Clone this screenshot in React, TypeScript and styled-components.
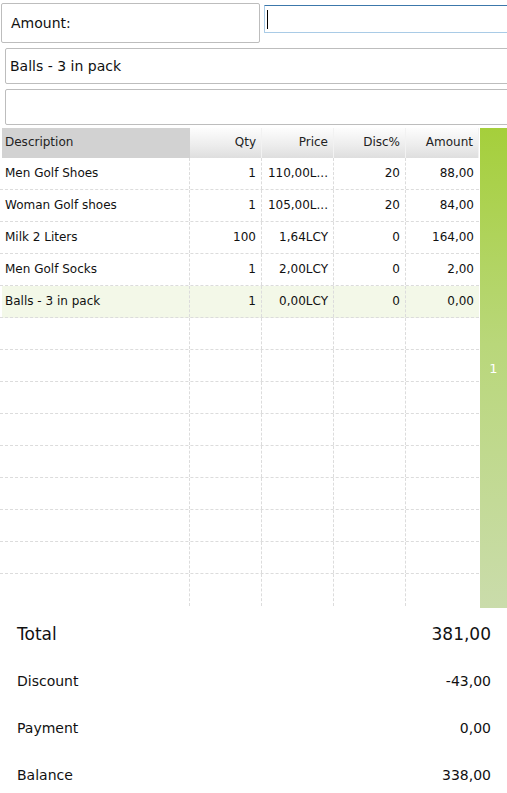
import React from 'react';
import styled, { createGlobalStyle } from 'styled-components';

const GlobalStyle = createGlobalStyle`
  html, body {
    margin: 0;
    padding: 0;
    background: #fff;
    overflow: hidden;
  }
  body {
    font-family: 'DejaVu Sans', Verdana, sans-serif;
    color: #111;
  }
`;

interface Line {
  description: string;
  qty: string;
  price: string;
  disc: string;
  amount: string;
}

const lines: Line[] = [
  { description: 'Men Golf Shoes', qty: '1', price: '110,00L...', disc: '20', amount: '88,00' },
  { description: 'Woman Golf shoes', qty: '1', price: '105,00L...', disc: '20', amount: '84,00' },
  { description: 'Milk 2 Liters', qty: '100', price: '1,64LCY', disc: '0', amount: '164,00' },
  { description: 'Men Golf Socks', qty: '1', price: '2,00LCY', disc: '0', amount: '2,00' },
  { description: 'Balls - 3 in pack', qty: '1', price: '0,00LCY', disc: '0', amount: '0,00' },
];

const TOTAL_ROWS = 14;
const ROW_COLS = '190px 72px 72px 72px 73px';
const HEAD_COLS = '188px 72px 72px 72px 73px';

const Page = styled.div`
  width: 507px;
  height: 793px;
  overflow: hidden;
  display: flex;
  flex-direction: column;
  & > * {
    flex-shrink: 0;
  }
`;

const TopRow = styled.div`
  display: flex;
  align-items: flex-start;
  gap: 4px;
  padding: 3px 0 0 1px;
`;

const LabelBox = styled.div`
  box-sizing: border-box;
  flex: 0 0 259px;
  height: 40px;
  border: 1px solid #bdbdbd;
  border-radius: 2px;
  display: flex;
  align-items: center;
  padding-left: 9px;
  font-size: 14px;
`;

const InputBox = styled.div`
  box-sizing: border-box;
  flex: 0 0 260px;
  height: 28px;
  margin-top: 2px;
  border: 1px solid #a9cbe6;
  border-top-color: #3c78ab;
  border-radius: 1px;
  display: flex;
  align-items: center;
  padding-left: 2px;
`;

const Caret = styled.span`
  width: 1px;
  height: 19px;
  background: #000;
`;

const FieldBox = styled.div`
  box-sizing: border-box;
  margin: 5px -10px 0 5px;
  height: 36px;
  border: 1px solid #bdbdbd;
  border-radius: 2px;
  display: flex;
  align-items: center;
  padding-left: 4px;
  font-size: 14px;
`;

const GridArea = styled.div`
  display: flex;
  margin-top: 3px;
  height: 480px;
`;

const Table = styled.div`
  width: 479px;
  display: flex;
  flex-direction: column;
`;

const HeaderRow = styled.div`
  display: grid;
  grid-template-columns: ${HEAD_COLS};
  height: 30px;
  margin-left: 2px;
`;

const HeaderCell = styled.div<{ $primary?: boolean; $right?: boolean }>`
  display: flex;
  align-items: center;
  justify-content: ${({ $right }) => ($right ? 'flex-end' : 'flex-start')};
  padding: 0 5px 2px 3px;
  font-size: 12px;
  color: #222;
  background: ${({ $primary }) =>
    $primary ? '#d2d2d2' : 'linear-gradient(to bottom, #fdfdfd 0%, #ececec 60%, #dedede 100%)'};
  border-right: ${({ $primary }) => ($primary ? 'none' : '1px solid #f2f2f2')};
`;

const Row = styled.div<{ $selected?: boolean; $last?: boolean }>`
  display: grid;
  grid-template-columns: ${ROW_COLS};
  height: 32px;
  box-sizing: border-box;
  border-bottom: ${({ $last }) => ($last ? 'none' : '1px dashed #dcdcdc')};
  background: ${({ $selected }) =>
    $selected ? 'linear-gradient(to right, transparent 2px, #f3f8e8 2px)' : 'transparent'};
`;

const Cell = styled.div<{ $right?: boolean; $divider?: boolean }>`
  display: flex;
  align-items: center;
  justify-content: ${({ $right }) => ($right ? 'flex-end' : 'flex-start')};
  padding: 0 5px 2px 5px;
  font-size: 12px;
  white-space: nowrap;
  overflow: hidden;
  border-right: ${({ $divider }) => ($divider ? '1px dashed #dcdcdc' : 'none')};
`;

const SideBar = styled.div`
  width: 27px;
  margin-left: 1px;
  background: linear-gradient(to bottom, #a5cf3b 0%, #b9d77a 45%, #cadcab 100%);
  display: flex;
  align-items: center;
  justify-content: center;
  color: #fff;
  font-size: 13px;
`;

const Summary = styled.div`
  display: flex;
  flex-direction: column;
  padding: 2px 16px 0 17px;
`;

const SummaryRow = styled.div<{ $large?: boolean }>`
  display: flex;
  justify-content: space-between;
  align-items: center;
  height: 47px;
  font-size: ${({ $large }) => ($large ? '17px' : '14px')};
  color: #111;
`;

const totals = [
  { label: 'Total', value: '381,00', large: true },
  { label: 'Discount', value: '-43,00' },
  { label: 'Payment', value: '0,00' },
  { label: 'Balance', value: '338,00' },
];

export default function App() {
  const empty = Array.from({ length: TOTAL_ROWS - lines.length });
  return (
    <Page>
      <GlobalStyle />
      <TopRow>
        <LabelBox>Amount:</LabelBox>
        <InputBox>
          <Caret />
        </InputBox>
      </TopRow>
      <FieldBox>Balls - 3 in pack</FieldBox>
      <FieldBox />

      <GridArea>
        <Table>
          <HeaderRow>
            <HeaderCell $primary>Description</HeaderCell>
            <HeaderCell $right>Qty</HeaderCell>
            <HeaderCell $right>Price</HeaderCell>
            <HeaderCell $right>Disc%</HeaderCell>
            <HeaderCell $right>Amount</HeaderCell>
          </HeaderRow>
          {lines.map((line, i) => (
            <Row key={line.description} $selected={i === lines.length - 1}>
              <Cell $divider>{line.description}</Cell>
              <Cell $divider $right>{line.qty}</Cell>
              <Cell $divider $right>{line.price}</Cell>
              <Cell $divider $right>{line.disc}</Cell>
              <Cell $right>{line.amount}</Cell>
            </Row>
          ))}
          {empty.map((_, i) => (
            <Row key={i} $last={i === empty.length - 1}>
              <Cell $divider />
              <Cell $divider />
              <Cell $divider />
              <Cell $divider />
              <Cell />
            </Row>
          ))}
        </Table>
        <SideBar>1</SideBar>
      </GridArea>

      <Summary>
        {totals.map((t) => (
          <SummaryRow key={t.label} $large={t.large}>
            <span>{t.label}</span>
            <span>{t.value}</span>
          </SummaryRow>
        ))}
      </Summary>
    </Page>
  );
}
